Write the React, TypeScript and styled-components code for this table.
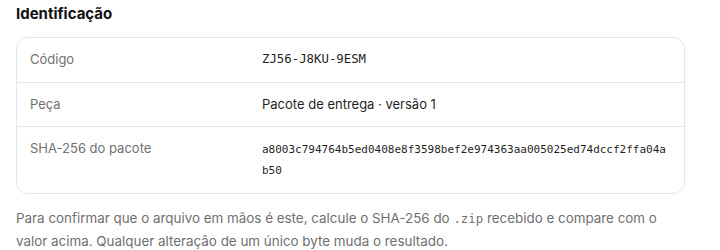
import React from "react";
import styled, { createGlobalStyle } from "styled-components";

const Global = createGlobalStyle`
  html, body { margin: 0; padding: 0; background: #ffffff; }
  body { font-family: Inter, "Noto Sans", sans-serif; color: #1f1f1f; }
`;

const Page = styled.div`
  width: 669px;
  padding: 4px 0 0 16px;
`;

const Title = styled.h3`
  margin: 0 0 13px;
  font-size: 15px;
  line-height: 20px;
  font-weight: 700;
  color: #111111;
`;

const Card = styled.div`
  border: 1px solid #e6e6e6;
  border-radius: 12px;
  background: #ffffff;
`;

const Row = styled.div`
  display: grid;
  grid-template-columns: 220px 1fr;
  column-gap: 12px;
  padding: 12px 15px 12px 13px;
  & + & { border-top: 1px solid #e6e6e6; }
`;

const Label = styled.div`
  font-size: 13px;
  line-height: 19.5px;
  color: #717171;
`;

const Value = styled.div<{ $mono?: "code" | "hash" }>`
  font-size: ${(p) => (p.$mono === "hash" ? "11px" : p.$mono === "code" ? "12.35px" : "13px")};
  line-height: ${(p) => (p.$mono === "hash" ? "21px" : "19.5px")};
  font-family: ${(p) => (p.$mono ? '"DejaVu Sans Mono", "Liberation Mono", monospace' : 'Inter, "Noto Sans", sans-serif')};
  color: #1f1f1f;
  word-break: ${(p) => (p.$mono === "hash" ? "break-all" : "normal")};
`;

const Note = styled.p`
  margin: 13px 0 0;
  font-size: 13.4px;
  line-height: 23px;
  color: #6f6f6f;
`;

const Code = styled.code`
  font-family: "DejaVu Sans Mono", "Liberation Mono", monospace;
  font-size: 12.35px;
  line-height: 1;
  color: #6f6f6f;
`;

export default function App() {
  return (
    <>
      <Global />
      <Page>
        <Title>Identificação</Title>
        <Card>
          <Row>
            <Label>Código</Label>
            <Value $mono="code">ZJ56-J8KU-9ESM</Value>
          </Row>
          <Row>
            <Label>Peça</Label>
            <Value>Pacote de entrega · versão 1</Value>
          </Row>
          <Row>
            <Label>SHA-256 do pacote</Label>
            <Value $mono="hash">a8003c794764b5ed0408e8f3598bef2e974363aa005025ed74dccf2ffa04ab50</Value>
          </Row>
        </Card>
        <Note>
          Para confirmar que o arquivo em mãos é este, calcule o SHA-256 do <Code>.zip</Code> recebido e compare com o
          valor acima. Qualquer alteração de um único byte muda o resultado.
        </Note>
      </Page>
    </>
  );
}
